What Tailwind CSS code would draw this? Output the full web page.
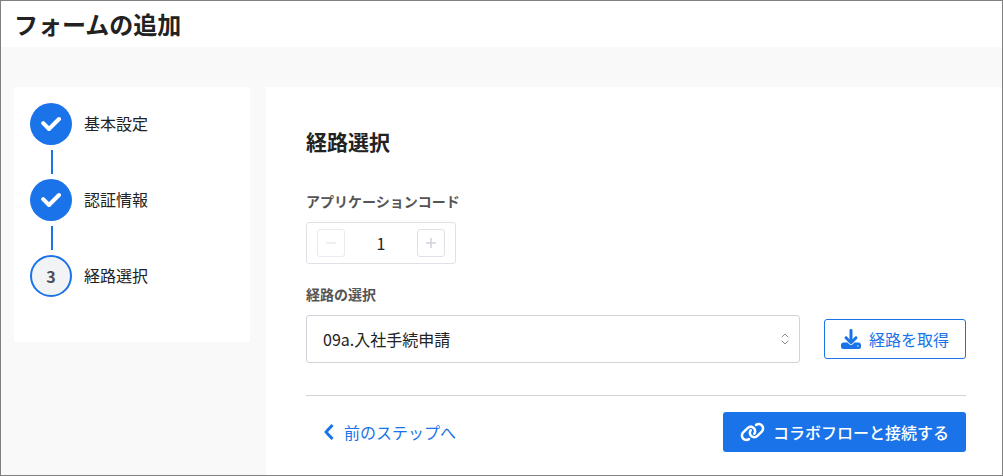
<!DOCTYPE html>
<html lang="ja">
<head>
  <meta charset="UTF-8" />
  <meta name="viewport" content="width=device-width, initial-scale=1.0"/>
  <title>フォームの追加</title>
  <script src="https://cdn.jsdelivr.net/npm/@tailwindcss/browser@4"></script>
</head>
<body class="min-h-screen flex flex-col border border-[#808080] bg-[#f9f9f9] text-[#222] text-base font-['Noto_Sans_CJK_JP',sans-serif]">

  <header class="bg-white px-[13px] pt-[5px] pb-[5px]">
    <h1 class="text-2xl leading-9 font-bold">フォームの追加</h1>
  </header>

  <div class="flex flex-1 items-stretch gap-4 pt-10 pl-[13px]">

    <!-- Steps -->
    <nav class="w-[236px] shrink-0 self-start bg-white px-4 pt-4 pb-[45px]">
      <ol>
        <li class="flex items-center gap-3">
          <span class="flex size-[42px] items-center justify-center rounded-full bg-[#1a73e8] text-white">
            <svg class="h-4 w-5" viewBox="0 0 20 16" fill="none" stroke="currentColor" stroke-width="4" stroke-linecap="round" stroke-linejoin="round" aria-hidden="true"><path d="M2.2 7.2l5.8 5.8L18 3"/></svg>
          </span>
          <span class="pb-0.5">基本設定</span>
        </li>
        <li class="my-[5px] ml-[21px] h-6 w-0.5 bg-[#1a73e8]" aria-hidden="true"></li>
        <li class="flex items-center gap-3">
          <span class="flex size-[42px] items-center justify-center rounded-full bg-[#1a73e8] text-white">
            <svg class="h-4 w-5" viewBox="0 0 20 16" fill="none" stroke="currentColor" stroke-width="4" stroke-linecap="round" stroke-linejoin="round" aria-hidden="true"><path d="M2.2 7.2l5.8 5.8L18 3"/></svg>
          </span>
          <span class="pb-0.5">認証情報</span>
        </li>
        <li class="my-[5px] ml-[21px] h-6 w-0.5 bg-[#1a73e8]" aria-hidden="true"></li>
        <li class="flex items-center gap-3" aria-current="step">
          <span class="flex size-[42px] items-center justify-center rounded-full border-2 border-[#1a73e8] bg-[#f1f3f5] font-bold text-[#495057]">3</span>
          <span class="pb-0.5">経路選択</span>
        </li>
      </ol>
    </nav>

    <main class="flex-1 bg-white pt-[38px] pr-9 pb-[22px] pl-10">
      <h2 class="text-[21px] leading-8 font-bold">経路選択</h2>

      <form>
        <label for="appCode" class="mt-8 block text-sm leading-6 font-bold text-[#555]">アプリケーションコード</label>
        <div class="mt-[9px] flex h-[42px] w-[150px] items-center rounded-[3px] border border-[#dee2e6] px-2.5">
          <button type="button" id="minusBtn" aria-label="減らす" disabled class="flex size-7 shrink-0 items-center justify-center rounded-[3px] border border-[#e9ecef] text-[#e9ecef]">
            <svg class="size-3" viewBox="0 0 12 12" fill="none" stroke="currentColor" stroke-width="1.5" aria-hidden="true"><path d="M1 6h10"/></svg>
          </button>
          <input id="appCode" type="text" inputmode="numeric" value="1" class="w-full min-w-0 flex-1 bg-transparent text-center text-base outline-none">
          <button type="button" id="plusBtn" aria-label="増やす" class="flex size-7 shrink-0 items-center justify-center rounded-[3px] border border-[#dee2e6] text-[#ced4da]">
            <svg class="size-3" viewBox="0 0 12 12" fill="none" stroke="currentColor" stroke-width="1.5" aria-hidden="true"><path d="M1 6h10M6 1v10"/></svg>
          </button>
        </div>

        <label for="route" class="mt-[18px] block text-sm leading-6 font-bold text-[#555]">経路の選択</label>
        <div class="mt-[9px] flex items-center gap-6">
          <div class="relative flex-1">
            <select id="route" class="h-12 w-full appearance-none rounded-[3px] border border-[#ced4da] bg-white pr-8 pl-4 text-base outline-none">
              <option>09a.入社手続申請</option>
            </select>
            <svg class="pointer-events-none absolute top-1/2 right-[11px] h-3 w-2 -translate-y-1/2 text-[#868e96]" viewBox="0 0 8 12" fill="none" stroke="currentColor" stroke-linecap="round" stroke-linejoin="round" aria-hidden="true"><path d="M1 4l3-3 3 3M1 8l3 3 3-3"/></svg>
          </div>
          <button type="button" class="flex h-10 shrink-0 items-center gap-2 rounded-[3px] border border-[#1a73e8] px-4 text-[#1a73e8]">
            <svg class="size-5" viewBox="0 0 512 512" fill="currentColor" aria-hidden="true"><path d="M288 32c0-17.7-14.3-32-32-32s-32 14.3-32 32V274.7l-73.4-73.4c-12.5-12.5-32.8-12.5-45.3 0s-12.5 32.8 0 45.3l128 128c12.5 12.5 32.8 12.5 45.3 0l128-128c12.5-12.5 12.5-32.8 0-45.3s-32.8-12.5-45.3 0L288 274.7V32zM64 352c-35.3 0-64 28.7-64 64v32c0 35.3 28.7 64 64 64H448c35.3 0 64-28.7 64-64V416c0-35.3-28.7-64-64-64H346.5l-45.3 45.3c-25 25-65.5 25-90.5 0L165.5 352H64zm368 56a24 24 0 1 1 0 48 24 24 0 1 1 0-48z" stroke="currentColor" stroke-width="12"/></svg>
            経路を取得
          </button>
        </div>

        <div class="mt-8 flex items-center justify-between border-t border-[#ced4da] pt-4">
          <button type="button" class="flex h-10 items-center gap-2.5 pl-[18px] text-[#1a73e8]">
            <svg class="h-4 w-2.5" viewBox="0 0 10 16" fill="none" stroke="currentColor" stroke-width="3" stroke-linejoin="round" aria-hidden="true"><path d="M8.5 1L2 8l6.5 7"/></svg>
            前のステップへ
          </button>
          <button type="submit" class="flex h-10 items-center gap-2 rounded-[3px] bg-[#1a73e8] px-[17px] font-medium text-white">
            <svg class="h-5 w-[25px]" viewBox="0 0 640 512" fill="currentColor" aria-hidden="true"><path d="M579.8 267.7c56.5-56.5 56.5-148 0-204.5c-50-50-128.8-56.5-186.3-15.4l-1.6 1.1c-14.4 10.3-17.7 30.3-7.4 44.6s30.3 17.7 44.6 7.4l1.6-1.1c32.1-22.9 76-19.3 103.8 8.6c31.5 31.5 31.5 82.5 0 114L422.3 334.8c-31.5 31.5-82.5 31.5-114 0c-27.9-27.9-31.5-71.8-8.6-103.8l1.1-1.6c10.3-14.4 6.9-34.4-7.4-44.6s-34.4-6.9-44.6 7.4l-1.1 1.6C206.5 251.2 213 330 263 380c56.5 56.5 148 56.5 204.5 0L579.8 267.7zM60.2 244.3c-56.5 56.5-56.5 148 0 204.5c50 50 128.8 56.5 186.3 15.4l1.6-1.1c14.4-10.3 17.7-30.3 7.4-44.6s-30.3-17.7-44.6-7.4l-1.6 1.1c-32.1 22.9-76 19.3-103.8-8.6C74 372 74 321 105.5 289.5L217.7 177.2c31.5-31.5 82.5-31.5 114 0c27.9 27.9 31.5 71.8 8.6 103.9l-1.1 1.6c-10.3 14.4-6.9 34.4 7.4 44.6s34.4 6.9 44.6-7.4l1.1-1.6C433.5 260.8 427 182 377 132c-56.5-56.5-148-56.5-204.5 0L60.2 244.3z"/></svg>
            コラボフローと接続する
          </button>
        </div>
      </form>
    </main>
  </div>

  <script>
  const appCode = document.getElementById('appCode');
  const minusBtn = document.getElementById('minusBtn');
  const plusBtn = document.getElementById('plusBtn');

  function setCode(value) {
    appCode.value = Math.max(1, value || 1);
    minusBtn.disabled = Number(appCode.value) <= 1;
  }

  minusBtn.addEventListener('click', () => setCode(parseInt(appCode.value) - 1));
  plusBtn.addEventListener('click', () => setCode(parseInt(appCode.value) + 1));
  appCode.addEventListener('change', () => setCode(parseInt(appCode.value)));
  </script>
</body>
</html>
